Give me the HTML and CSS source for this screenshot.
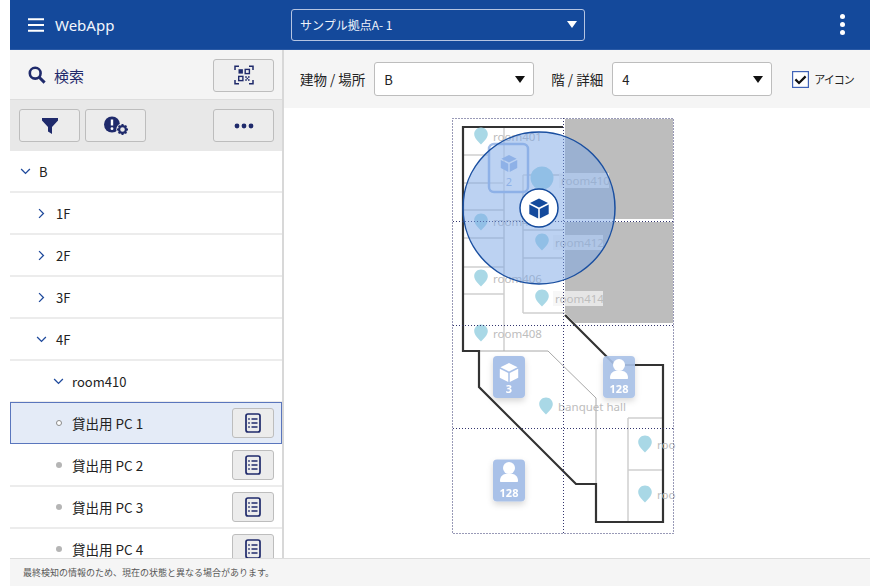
FILE: index.html
```html
<!DOCTYPE html>
<html lang="ja">
<head>
<meta charset="utf-8">
<title>WebApp</title>
<link rel="stylesheet" href="styles.css">
</head>
<body>
<svg class="defs" width="0" height="0">
  <defs>
    <symbol id="chev-d" viewBox="0 0 12 8"><path d="M1 1.200l5 5 5-5" fill="none" stroke="#1f4a9c" stroke-width="1.5"/></symbol>
    <symbol id="chev-r" viewBox="0 0 8 12"><path d="M1.200 1l5 5-5 5" fill="none" stroke="#1f4a9c" stroke-width="1.5"/></symbol>
    <symbol id="doc" viewBox="0 0 16 20"><rect x="1" y="1" width="14" height="18" rx="2" fill="none" stroke="#1f2a6b" stroke-width="1.7"/><path d="M6.500 6h6M6.500 10h6M6.500 14h6" stroke="#1f2a6b" stroke-width="1.6"/><path d="M3.200 6h1.600M3.200 10h1.600M3.200 14h1.600" stroke="#1f2a6b" stroke-width="1.6"/></symbol>
  </defs>
</svg>
<div class="app">
  <header class="topbar">
    <div class="brand">
      <svg class="burger" width="16" height="14" viewBox="0 0 16 14"><path d="M0 1.200h16M0 7h16M0 12.800h16" stroke="#fff" stroke-width="2"/></svg>
      <span class="brand-name">WebApp</span>
    </div>
    <div class="site-select">
      <span>サンプル拠点A- 1</span>
      <i class="caret caret-white"></i>
    </div>
    <div class="kebab"><i></i><i></i><i></i></div>
  </header>
  <div class="body">
    <aside class="sidebar">
      <div class="search-row">
        <svg width="18" height="18" viewBox="0 0 18 18"><circle cx="7.200" cy="7.200" r="5.400" fill="none" stroke="#1f2a6b" stroke-width="2.600"/><path d="M11.200 11.200l5.400 5.400" stroke="#1f2a6b" stroke-width="3"/></svg>
        <span class="search-label">検索</span>
        <button class="tool-btn push">
          <svg width="20" height="20" viewBox="0 0 20 20" fill="none"><path d="M1 5V1.200h4M15 1.200h4V5M19 15v3.800h-4M5 18.800H1V15" stroke="#1f2a6b" stroke-width="1.5"/><rect x="4.500" y="4.200" width="4.400" height="4.400" fill="#1f2a6b"/><rect x="11.200" y="4.400" width="4.200" height="4.200" stroke="#1f2a6b" stroke-width="1.4"/><rect x="4.700" y="11.400" width="4.200" height="4.200" stroke="#1f2a6b" stroke-width="1.4"/><path d="M11.200 11.200h1.600v1.600h-1.600zM14 11.200h1.600v1.600H14zM12.600 12.800h1.500v1.500h-1.500zM11.200 14.200h1.600v1.600h-1.600zM14 14.200h1.600v1.600H14z" fill="#1f2a6b"/></svg>
        </button>
      </div>
      <div class="filter-row">
        <button class="tool-btn">
          <svg width="16" height="16" viewBox="0 0 16 16"><path d="M0 0h16v2.600L10 9v7l-4-2.600V9L0 2.600z" fill="#1f2a6b"/></svg>
        </button>
        <button class="tool-btn">
          <svg width="26" height="20" viewBox="0 0 26 20"><circle cx="9" cy="8.500" r="8" fill="#1f2a6b"/><path d="M9 3.500v6" stroke="#fff" stroke-width="2.400"/><circle cx="9" cy="12.700" r="1.400" fill="#fff"/><circle cx="19.500" cy="13.500" r="6.200" fill="#e9e9e9"/><circle cx="19.500" cy="13.500" r="3.400" fill="none" stroke="#1f2a6b" stroke-width="2.200"/><path d="M19.500 8v2M19.500 17v2M14 13.500h2M23 13.500h2M15.600 9.600l1.400 1.400M22 16l1.400 1.400M15.600 17.400L17 16M22 11l1.400-1.400" stroke="#1f2a6b" stroke-width="2"/></svg>
        </button>
        <button class="tool-btn push">
          <svg width="20" height="6" viewBox="0 0 20 6"><circle cx="3" cy="3" r="2.400" fill="#1f2a6b"/><circle cx="10" cy="3" r="2.400" fill="#1f2a6b"/><circle cx="17" cy="3" r="2.400" fill="#1f2a6b"/></svg>
        </button>
      </div>
      <ul class="tree">
        <li class="row"><svg class="chev-d" width="11" height="7"><use href="#chev-d"/></svg><span>B</span></li>
        <li class="row lvl1"><svg class="chev-r" width="7" height="11"><use href="#chev-r"/></svg><span>1F</span></li>
        <li class="row lvl1"><svg class="chev-r" width="7" height="11"><use href="#chev-r"/></svg><span>2F</span></li>
        <li class="row lvl1"><svg class="chev-r" width="7" height="11"><use href="#chev-r"/></svg><span>3F</span></li>
        <li class="row lvl1 open"><svg class="chev-d" width="11" height="7"><use href="#chev-d"/></svg><span>4F</span></li>
        <li class="row lvl2"><svg class="chev-d" width="11" height="7"><use href="#chev-d"/></svg><span>room410</span></li>
        <li class="row item selected"><i class="dot hollow"></i><span>貸出用 PC 1</span><button class="doc-btn"><svg width="16" height="20"><use href="#doc"/></svg></button></li>
        <li class="row item"><i class="dot"></i><span>貸出用 PC 2</span><button class="doc-btn"><svg width="16" height="20"><use href="#doc"/></svg></button></li>
        <li class="row item"><i class="dot"></i><span>貸出用 PC 3</span><button class="doc-btn"><svg width="16" height="20"><use href="#doc"/></svg></button></li>
        <li class="row item"><i class="dot"></i><span>貸出用 PC 4</span><button class="doc-btn"><svg width="16" height="20"><use href="#doc"/></svg></button></li>
      </ul>
    </aside>
    <main class="main">
      <div class="toolbar">
        <label class="field-label">建物 / 場所</label>
        <div class="select sel-b"><span>B</span><i class="caret"></i></div>
        <label class="field-label label-floor">階 / 詳細</label>
        <div class="select sel-f"><span>4</span><i class="caret"></i></div>
        <div class="check">
          <svg width="17" height="17" viewBox="0 0 17 17"><rect x=".6" y=".6" width="15.800" height="15.800" fill="#fff" stroke="#3f63b8" stroke-width="1.200"/><path d="M3.400 8.400l3.600 3.600 6.600-6.600" fill="none" stroke="#111" stroke-width="2.200"/></svg>
          <span>アイコン</span>
        </div>
      </div>
      <div class="map">
        <svg class="plan" width="240" height="440" viewBox="445 110 240 440">
          <defs>
            <path id="pin" d="M0-8.500c3.900 0 6.800 2.900 6.800 6.600 0 3.900-3.600 7.200-6.800 10.400C-3.200 5.300-6.800 2-6.800-1.900-6.800-5.600-3.900-8.500 0-8.500z" fill="#a9d8e6"/>
            <filter id="sh" x="-30%" y="-30%" width="160%" height="160%"><feDropShadow dx="0" dy="3" stdDeviation="3" flood-color="#000" flood-opacity=".16"/></filter>
            <g id="person"><circle cx="0" cy="-6" r="6" fill="#fff"/><path d="M-9 7c0-5 3-7.500 9-7.500S9 2 9 7c0 .6-.5 1-1 1H-8c-.5 0-1-.4-1-1z" fill="#fff"/></g>
            <g id="cube"><path d="M0-9.500L9-5 0-.5-9-5z"/><path d="M-9.700-3.500L-.8 1v9.500L-9.700 6z"/><path d="M9.700-3.500L.8 1v9.500L9.700 6z"/></g>
          </defs>
          <path class="gray" d="M565 119h108v100H565zM565 222h108v101H575l-10-10z"/>
          <g class="inner">
            <path d="M463 155h27M463 183h40M463 210h41M463 238h41M463 267h41M463 294h41M504 127v224"/>
            <path d="M523 175h40M523 230h40M523 258h40M523 313h42M523 175v138"/>
            <path d="M628 418v104M628 418h35M628 470h35"/>
          </g>
          <path class="inner thin" d="M479 351h69l48 47v124"/>
          <path class="wall" d="M563 127H463v224h16v36l97 97h20v38h67V365h-48l-50-50"/>
          <g class="lbl">
            <text x="493" y="141">room401</text>
            <rect class="lblbg" x="559" y="173" width="50" height="15"/>
            <text x="561" y="185">room410</text>
            <text x="493" y="226">room404</text>
            <rect class="lblbg" x="553" y="235" width="50" height="15"/>
            <text x="555" y="247">room412</text>
            <text x="493" y="283">room406</text>
            <rect class="lblbg" x="553" y="291" width="50" height="15"/>
            <text x="555" y="303">room414</text>
            <text x="493" y="338">room408</text>
            <text x="558" y="411">banquet hall</text>
            <text x="657" y="449">roo</text>
            <text x="657" y="499">roo</text>
          </g>
          <use href="#pin" x="481" y="136"/>
          <circle cx="542" cy="178" r="11.500" fill="#a9d8e6"/>
          <use href="#pin" x="481" y="222"/>
          <use href="#pin" x="542" y="242"/>
          <use href="#pin" x="481" y="278"/>
          <use href="#pin" x="542" y="298"/>
          <use href="#pin" x="481" y="333"/>
          <use href="#pin" x="546" y="406"/>
          <use href="#pin" x="645" y="444"/>
          <use href="#pin" x="645" y="494"/>
          <g class="grid">
            <rect x="452.500" y="118.500" width="221" height="415"/>
            <path d="M563.500 118v415M453 221.500h221M453 325.500h221M453 428.500h221"/>
          </g>
          <g>
            <rect x="489" y="144" width="39" height="48" rx="5" fill="#fff" fill-opacity=".3" stroke="#a3bde8" stroke-width="2.500"/>
            <g transform="translate(509 163) scale(.85)" fill="#a3bde8"><use href="#cube"/></g>
            <text class="badge-txt dim" x="509" y="186">2</text>
          </g>
          <g class="badge" filter="url(#sh)">
            <rect x="493" y="356" width="32" height="42" rx="4"/>
            <g transform="translate(509 372) scale(.95)" fill="#fff"><use href="#cube"/></g>
            <text class="badge-txt" x="509" y="393">3</text>
          </g>
          <g class="badge" filter="url(#sh)">
            <rect x="603" y="356" width="32" height="42" rx="4" fill-opacity=".9"/>
            <use href="#person" x="619" y="371"/>
            <text class="badge-txt" x="619" y="393">128</text>
          </g>
          <g class="badge" filter="url(#sh)">
            <rect x="493" y="459.500" width="32" height="42" rx="4"/>
            <use href="#person" x="509" y="474"/>
            <text class="badge-txt" x="509" y="497">128</text>
          </g>
          <circle cx="539" cy="208" r="76" fill="#7aa5e6" fill-opacity=".5" stroke="#1a4fa0" stroke-width="1.500"/>
          <circle cx="539" cy="208" r="19" fill="#fff" stroke="#144a9c" stroke-width="1.500"/>
          <g transform="translate(539 208)" fill="#144a9c"><use href="#cube"/></g>
        </svg>
      </div>
    </main>
  </div>
  <footer class="footer">最終検知の情報のため、現在の状態と異なる場合があります。</footer>
</div>
</body>
</html>
```
FILE: styles.css
```css
* { box-sizing: border-box; }
html, body { margin: 0; padding: 0; background: #fff; }
body { font-family: "Noto Sans", "Noto Sans CJK JP", sans-serif; color: #222; }
.defs { position: absolute; }
.app { width: 860px; height: 586px; margin: 0 10px; display: flex; flex-direction: column; overflow: hidden; }

.topbar { height: 50px; flex: none; background: #14499b; display: flex; align-items: center; color: #fff; border-bottom: 1px solid #2a5aa6; }
.brand { width: 281px; display: flex; align-items: center; padding-left: 18px; }
.brand-name { margin-left: 11px; font-size: 15px; color: #f2f5fb; }
.site-select { width: 294px; height: 32px; border: 1px solid #b4c4e2; border-radius: 3px; display: flex; align-items: center; justify-content: space-between; padding: 0 7px 0 8px; font-size: 12px; color: #eef2fa; font-family: "Noto Sans CJK JP", sans-serif; }
.kebab { margin-left: auto; margin-right: 25px; display: flex; flex-direction: column; gap: 3px; }
.kebab i { width: 5px; height: 5px; border-radius: 50%; background: #fff; display: block; }
.caret { width: 0; height: 0; border-left: 5px solid transparent; border-right: 5px solid transparent; border-top: 7px solid #111; display: block; margin-right: 4px; }
.caret-white { border-top-color: #fff; margin-right: 0; }

.body { flex: 1; display: flex; min-height: 0; }
.sidebar { width: 274px; flex: none; border-right: 2px solid #d8d8d8; display: flex; flex-direction: column; overflow: hidden; }
.search-row { height: 50px; flex: none; background: #f4f4f4; display: flex; align-items: center; padding: 1px 8px 0 18px; border-bottom: 1px solid #ddd; }
.search-label { margin-left: 8px; font-size: 15px; color: #1f2a6b; font-family: "Noto Sans CJK JP", sans-serif; }
.filter-row { height: 51px; flex: none; background: #e8e8e8; display: flex; align-items: flex-start; gap: 5px; padding: 9px 8px 0 9px; }
.tool-btn { width: 61px; height: 33px; padding: 0; background: #ececec; border: 1px solid #bdbdbd; border-radius: 3px; display: flex; align-items: center; justify-content: center; }
.search-row .tool-btn { background: #efefef; }
.push { margin-left: auto; }

.tree { list-style: none; margin: 0; padding: 0; flex: 1; min-height: 0; overflow: hidden; font-size: 13px; font-family: "Noto Sans CJK JP", sans-serif; color: #222; }
.row { height: 42px; display: flex; align-items: center; padding-left: 10px; border-bottom: 2px solid #ececec; }
.row > span { margin-left: 8px; }
.lvl1 { padding-left: 28px; }
.lvl1 .chev-r { margin-right: 3px; }
.lvl1.open { padding-left: 26px; }
.lvl1.open > span { margin-left: 9px; }
.lvl2 { padding-left: 43px; }
.item { padding-left: 46px; padding-right: 8px; font-size: 13.5px; }
.item > span { margin-left: 10px; }
.selected { background: #e4ebf7; border: 1px solid #5a76bd; padding-left: 45px; padding-right: 7px; margin: -1px 0 1px; }
.dot { width: 6px; height: 6px; border-radius: 50%; background: #b5b5b5; display: block; }
.dot.hollow { background: #fff; border: 1px solid #8a8a8a; }
.doc-btn { margin-left: auto; width: 42px; height: 30px; padding: 0; background: #ececec; border: 1px solid #bdbdbd; border-radius: 3px; display: flex; align-items: center; justify-content: center; }

.main { flex: 1; min-width: 0; display: flex; flex-direction: column; }
.toolbar { height: 58px; flex: none; background: #f5f5f5; display: flex; align-items: center; padding-left: 16px; font-family: "Noto Sans CJK JP", sans-serif; font-size: 13.5px; color: #222; }
.field-label { white-space: nowrap; }
.select { width: 160px; height: 34px; background: #fff; border: 1px solid #bdbdbd; border-radius: 3px; display: flex; align-items: center; justify-content: space-between; padding: 0 4px 0 9px; margin-left: 9px; font-size: 13px; }
.label-floor { margin-left: 17px; }
.check { display: flex; align-items: center; margin-left: 20px; gap: 5px; font-size: 11px; letter-spacing: -1px; }

.map { flex: 1; min-height: 0; overflow: hidden; background: #fff; padding: 2px 0 0 161px; }
.plan { display: block; }
.gray { fill: #bdbdbd; }
.inner { fill: none; stroke: #cfcfcf; stroke-width: 1.5; }
.inner.thin { stroke: #a8a8a8; stroke-width: 1; }
.wall { fill: none; stroke: #333; stroke-width: 2.2; }
.lblbg { fill: #f4f4f4; opacity: .75; }
.lbl text { font-family: "Noto Sans", sans-serif; font-size: 11.5px; fill: #bdbdbd; }
.grid { fill: none; stroke: #33356e; stroke-width: 1; stroke-dasharray: 1 2; }
.badge rect { fill: #a9c1e8; }
.badge-txt { font-family: "Noto Sans", sans-serif; font-size: 11px; font-weight: 700; fill: #fff; text-anchor: middle; }
.badge-txt.dim { fill: #a3bde8; font-weight: 400; }

.footer { height: 28px; flex: none; background: #f5f5f5; border-top: 1px solid #ddd; display: flex; align-items: center; padding-left: 13px; font-size: 9px; color: #555; font-family: "Noto Sans CJK JP", sans-serif; }
```
